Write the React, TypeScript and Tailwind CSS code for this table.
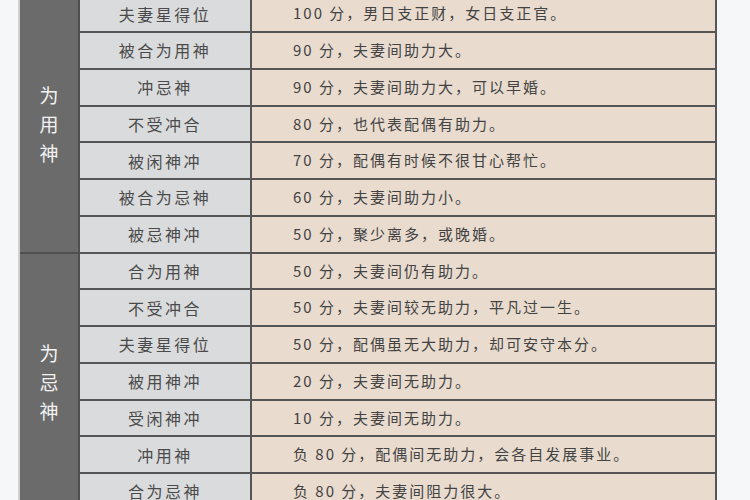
import React from "react";

type Row = { label: string; desc: string };

const sections: { title: string[]; rows: Row[] }[] = [
  {
    title: ["为", "用", "神"],
    rows: [
      { label: "夫妻星得位", desc: "100 分，男日支正财，女日支正官。" },
      { label: "被合为用神", desc: "90 分，夫妻间助力大。" },
      { label: "冲忌神", desc: "90 分，夫妻间助力大，可以早婚。" },
      { label: "不受冲合", desc: "80 分，也代表配偶有助力。" },
      { label: "被闲神冲", desc: "70 分，配偶有时候不很甘心帮忙。" },
      { label: "被合为忌神", desc: "60 分，夫妻间助力小。" },
      { label: "被忌神冲", desc: "50 分，聚少离多，或晚婚。" },
    ],
  },
  {
    title: ["为", "忌", "神"],
    rows: [
      { label: "合为用神", desc: "50 分，夫妻间仍有助力。" },
      { label: "不受冲合", desc: "50 分，夫妻间较无助力，平凡过一生。" },
      { label: "夫妻星得位", desc: "50 分，配偶虽无大助力，却可安守本分。" },
      { label: "被用神冲", desc: "20 分，夫妻间无助力。" },
      { label: "受闲神冲", desc: "10 分，夫妻间无助力。" },
      { label: "冲用神", desc: "负 80 分，配偶间无助力，会各自发展事业。" },
      { label: "合为忌神", desc: "负 80 分，夫妻间阻力很大。" },
    ],
  },
];

export default function App() {
  return (
    <div
      className="h-[500px] w-[750px] overflow-hidden bg-[#f6f7f8]"
      style={{ fontFamily: '"Noto Sans CJK SC", "Noto Sans", sans-serif' }}
    >
      <div className="ml-[18px] mt-[-3.75px] w-[699px] border-l-2 border-l-[#d0d0d0] border-r-2 border-r-[#575757]">
        {sections.map((sec, si) => (
          <div key={si} className="flex">
            {/* group label */}
            <div className="flex w-[60px] shrink-0 flex-col items-center justify-center gap-[10px] border-b-2 border-r-2 border-[#4f4f4f] bg-[#6b6b6b] text-[19px] leading-[19px] text-[#f2f2f2]">
              {sec.title.map((ch, i) => (
                <span key={i}>{ch}</span>
              ))}
            </div>
            <div className="flex flex-1 flex-col">
              {sec.rows.map((r, ri) => (
                <div key={ri} className="box-border flex h-[36.75px] border-b-2 border-[#555555]">
                  <div className="flex w-[172px] shrink-0 items-center justify-center border-r-2 border-[#555555] bg-[#dadbdc] text-[16px] tracking-[2.5px] text-[#4a4a4a]">
                    {r.label}
                  </div>
                  <div className="flex flex-1 items-center bg-[#e9dccf] pl-[41px] text-[15px] tracking-[2px] text-[#434343]">
                    {r.desc}
                  </div>
                </div>
              ))}
            </div>
          </div>
        ))}
      </div>
    </div>
  );
}
